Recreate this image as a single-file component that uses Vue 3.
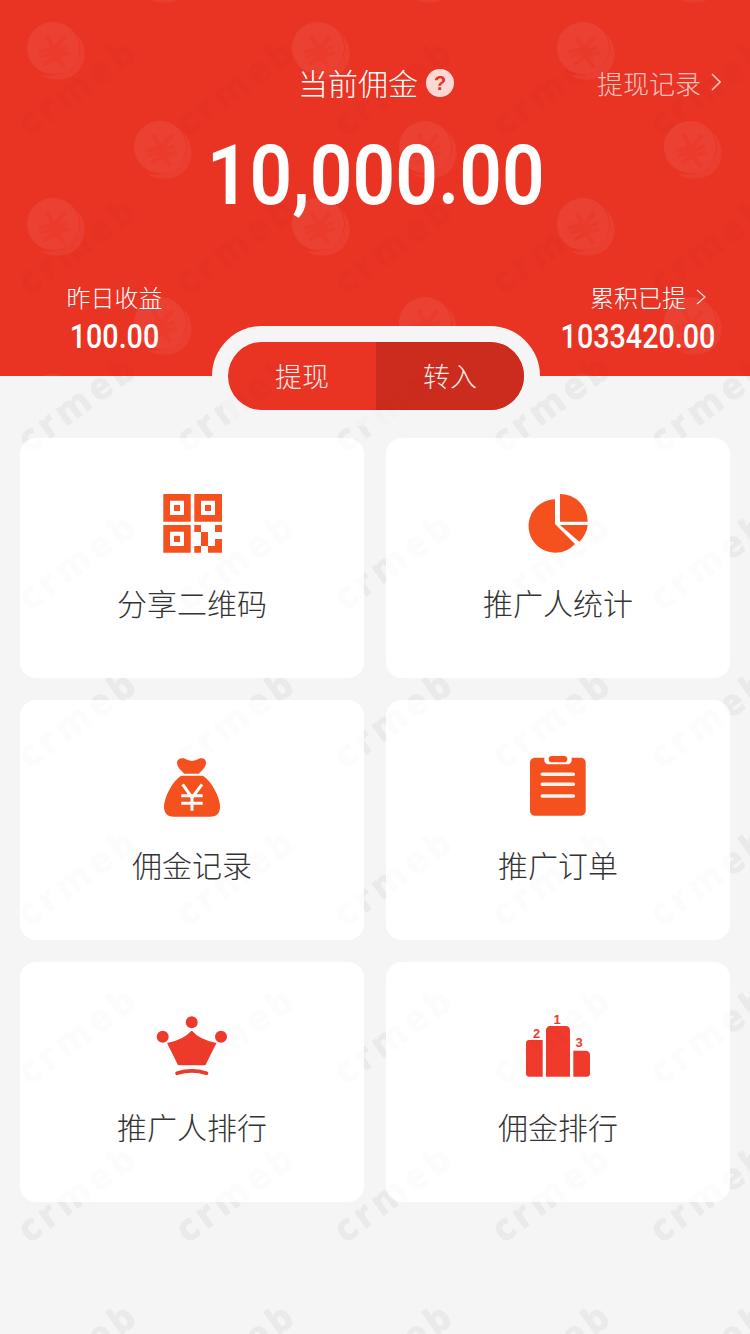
<script setup>
const menus = [
  { label: '分享二维码', icon: 'qr' },
  { label: '推广人统计', icon: 'pie' },
  { label: '佣金记录', icon: 'bag' },
  { label: '推广订单', icon: 'clip' },
  { label: '推广人排行', icon: 'crown' },
  { label: '佣金排行', icon: 'podium' }
]
</script>

<template>
  <div class="page">
    <svg class="watermark" width="750" height="1334">
      <defs>
        <pattern id="markTile" width="158" height="158" patternUnits="userSpaceOnUse">
          <text class="mark" x="78" y="99" text-anchor="middle" transform="rotate(-36 78 86)">crmeb</text>
        </pattern>
      </defs>
      <rect width="750" height="1334" fill="url(#markTile)" />
    </svg>

    <div class="hero">
      <svg class="coins" width="750" height="376">
        <defs>
          <g id="coin">
            <circle cx="0" cy="0" r="26" fill="#fff" fill-opacity=".07" />
            <path d="M22 -15 C35 -4 35 17 21 27 C11 33 -3 33 -12 27 C6 30 25 20 27 1 C27 -6 25 -11 22 -15Z" fill="#fff" fill-opacity=".06" />
            <path d="M-5 -14 L1 -3 L11 -14 L14 -11 L5 1 L14 -3 L15 1 L5 6 L16 3 L17 7 L7 10 L13 19 L9 21 L2 12 L-8 18 L-10 14 L-1 8 L-12 11 L-13 7 L-3 4 L-14 6 L-15 2 L-3 -1 L-9 -11Z" fill="#e93323" fill-opacity=".38" />
          </g>
          <pattern id="coinTile" x="0" y="10" width="265" height="176" patternUnits="userSpaceOnUse">
            <use href="#coin" x="53" y="38" />
            <use href="#coin" x="160" y="137" />
          </pattern>
        </defs>
        <rect width="750" height="376" fill="url(#coinTile)" />
      </svg>

      <div class="hero-top">
        <div></div>
        <div class="title">
          <span>当前佣金</span>
          <span class="help">?</span>
        </div>
        <div class="record">
          <span>提现记录</span>
          <svg width="10" height="18" viewBox="0 0 10 18"><path d="M1 1 L9 9 L1 17" fill="none" stroke="currentColor" stroke-width="1.6" /></svg>
        </div>
      </div>

      <div class="amount"><span>10,000.00</span></div>

      <div class="stats">
        <div class="stat">
          <div class="stat-label">昨日收益</div>
          <div class="stat-value"><span>100.00</span></div>
        </div>
        <div class="stat">
          <div class="stat-label">
            累积已提
            <svg class="stat-arrow" width="10" height="16" viewBox="0 0 10 16"><path d="M1 1 L9 8 L1 15" fill="none" stroke="currentColor" stroke-width="1.4" /></svg>
          </div>
          <div class="stat-value"><span>1033420.00</span></div>
        </div>
      </div>

      <div class="ring">
        <div class="pill">
          <div class="pill-btn">提现</div>
          <div class="pill-btn dark">转入</div>
        </div>
      </div>
    </div>

    <div class="grid">
      <div v-for="m in menus" :key="m.label" class="card">
        <div class="icon">
          <svg v-if="m.icon === 'qr'" width="60" height="60" viewBox="0 0 60 60" fill="#f4511e">
            <path fill-rule="evenodd" d="M1.3 0H28.7V27.7H1.3ZM8 6.7V21H22V6.7ZM12 11H18V17H12ZM32.3 0H60V27.7H32.3ZM39 6.7V21H53V6.7ZM43 11H49V17H43ZM1.3 31H28.7V58.7H1.3ZM8 37.7V52H22V37.7ZM12 42H18V48H12Z" />
            <path d="M32.3 31H39V38H32.3ZM53 31H60V38H53ZM39 38H46V52H39ZM32.3 52H39V58.7H32.3ZM53 45H60V58.7H46V52H53Z" />
          </svg>
          <svg v-else-if="m.icon === 'pie'" width="60" height="60" viewBox="0 0 60 60" fill="#f4511e">
            <path d="M27 30 L47 50 A26.7 26.7 0 1 1 27 5.3Z" />
            <path d="M32 0 A27.7 27.7 0 0 1 59.7 27.7 H32Z" />
            <path d="M32 31 H59.7 A27.7 27.7 0 0 1 51.3 47.7Z" />
          </svg>
          <svg v-else-if="m.icon === 'bag'" width="60" height="60" viewBox="0 -1.7 60 60" fill="#f4511e">
            <path d="M15 5 C15 1 20 0 23 1 C26 2.5 28 3 30 3 C32 3 34 2.5 37 1 C40 0 44 1 44 5 C44 10 39 13 37 16 H22 C20 13 15 10 15 5Z" />
            <path d="M19 18 H41 C50 24 58 40 58 49 C58 56 54 59 48 59 H12 C6 59 2 56 2 49 C2 40 10 24 19 18Z" />
            <path d="M20.7 26.6 L30 40 L40 26.6 M19.3 38 H40.7 M19.3 45.6 H40.7 M30 38 V53" fill="none" stroke="#fff" stroke-width="3" />
          </svg>
          <svg v-else-if="m.icon === 'clip'" width="60" height="60" viewBox="0 -1.7 60 60" fill="#f4511e">
            <path d="M7 0 H16.3 V2 C16.3 5 18 6.6 21 6.6 H39 C42 6.6 43.7 5 43.7 2 V0 H52.7 C55.5 0 57.7 2.2 57.7 5 V53 C57.7 55.8 55.5 58 52.7 58 H7 C4.2 58 2 55.8 2 53 V5 C2 2.2 4.2 0 7 0Z" />
            <rect x="20.7" y="-1.7" width="18.6" height="6.3" rx="3.1" />
            <path d="M14.3 16.6 H45.3 M14.3 26.6 H45.3 M14.3 38.3 H45.3" stroke="#fff3ee" stroke-width="3.6" stroke-linecap="round" fill="none" />
          </svg>
          <svg v-else-if="m.icon === 'crown'" width="76" height="60" viewBox="0 3 76 60" fill="#ee3a2b">
            <circle cx="8.7" cy="21.7" r="6" />
            <circle cx="37.7" cy="7.3" r="6" />
            <circle cx="67" cy="21.7" r="6" />
            <path d="M14 28.5 C24 26.5 32 23 37.7 16.5 C43 23 52 26.5 61.5 28.5 L51 49.5 H24.5Z" stroke="#ee3a2b" stroke-width="1.4" stroke-linejoin="round" />
            <path d="M23 58.3 Q37.7 53.5 52.5 58.3" fill="none" stroke="#ee3a2b" stroke-width="3.6" stroke-linecap="round" />
          </svg>
          <svg v-else width="64" height="60" viewBox="0 6 64 60" fill="#ef3a2c">
            <path d="M3 28 H16.7 V64.7 H3 C1.3 64.7 0 63.4 0 61.7 V31 C0 29.3 1.3 28 3 28Z" />
            <path d="M24 14 H40 C42.2 14 44 15.8 44 18 V64.7 H20 V18 C20 15.8 21.8 14 24 14Z" />
            <path d="M47.3 38.7 H60 C62.2 38.7 64 40.5 64 42.7 V61.7 C64 63.4 62.7 64.7 61 64.7 H47.3Z" />
            <text class="rank" x="10.7" y="25.5">2</text>
            <text class="rank" x="31" y="11.5">1</text>
            <text class="rank" x="53" y="34.5">3</text>
          </svg>
        </div>
        <div class="label">{{ m.label }}</div>
      </div>
    </div>

    <svg class="watermark over" width="750" height="1334">
      <rect width="750" height="1334" fill="url(#markTile)" />
    </svg>
  </div>
</template>

<style scoped>
.page {
  position: relative;
  width: 750px;
  height: 1334px;
  overflow: hidden;
  background: #f5f5f5;
  font-family: "Noto Sans CJK SC", "Liberation Sans", sans-serif;
  font-weight: 300;
}
.hero {
  position: relative;
  height: 376px;
  padding-top: 62px;
  box-sizing: border-box;
  background: #e93323;
  color: #fff;
}
.coins {
  position: absolute;
  left: 0;
  top: 0;
}
.hero-top {
  position: relative;
  display: grid;
  grid-template-columns: 1fr auto 1fr;
  align-items: center;
  height: 40px;
  margin-left: 2px;
}
.title {
  display: flex;
  align-items: center;
  gap: 8px;
  font-size: 30px;
  line-height: 40px;
}
.help {
  width: 28px;
  height: 28px;
  margin-top: 2px;
  border-radius: 50%;
  background: #fdd9d5;
  color: #e93323;
  font-family: "Liberation Sans", sans-serif;
  font-weight: 700;
  font-size: 20px;
  line-height: 28px;
  text-align: center;
}
.record {
  display: flex;
  align-items: center;
  justify-content: flex-end;
  gap: 10px;
  padding-right: 29px;
  font-size: 26px;
  color: rgba(255, 255, 255, 0.72);
}
.amount {
  position: relative;
  margin-top: 29px;
  margin-left: 2px;
  height: 90px;
  text-align: center;
  font-family: Roboto, "Liberation Sans", sans-serif;
  font-weight: 600;
  font-size: 84px;
  line-height: 90px;
}
.amount span {
  display: inline-block;
  transform: scaleX(0.89);
}
.stats {
  position: relative;
  display: flex;
  justify-content: space-between;
  margin-top: 58px;
  padding: 0 23px 0 63px;
}
.stat {
  text-align: center;
}
.stat-label {
  position: relative;
  font-size: 24px;
  line-height: 36px;
}
.stat-arrow {
  position: absolute;
  right: 21px;
  top: 10px;
  color: rgba(255, 255, 255, 0.8);
}
.stat-value {
  font-family: Roboto, "Liberation Sans", sans-serif;
  font-weight: 500;
  font-size: 33px;
  line-height: 44px;
}
.stat-value span {
  display: inline-block;
  transform: scaleX(0.87);
}
.ring {
  position: absolute;
  left: 212px;
  top: 326px;
  width: 328px;
  height: 100px;
  box-sizing: border-box;
  padding: 16px;
  border-radius: 50px;
  background: #f5f5f5;
}
.pill {
  display: flex;
  height: 68px;
  border-radius: 34px;
  overflow: hidden;
  background: #e93323;
}
.pill-btn {
  flex: 1;
  font-size: 27px;
  line-height: 68px;
  text-align: center;
  color: rgba(255, 255, 255, 0.92);
}
.pill-btn.dark {
  background: #cc2c1e;
}
.grid {
  position: relative;
  display: grid;
  grid-template-columns: 344px 344px;
  grid-auto-rows: 240px;
  gap: 22px;
  padding: 62px 20px 0;
}
.card {
  display: flex;
  flex-direction: column;
  align-items: center;
  padding-top: 56px;
  box-sizing: border-box;
  background: #fff;
  border-radius: 16px;
}
.icon {
  display: flex;
  justify-content: center;
  height: 60px;
}
.icon svg {
  overflow: visible;
}
.rank {
  font-family: "Liberation Sans", sans-serif;
  font-weight: 700;
  font-size: 13px;
  text-anchor: middle;
}
.label {
  margin-top: 24px;
  font-size: 30px;
  line-height: 48px;
  color: #333;
}
.watermark {
  position: absolute;
  left: 0;
  top: 0;
  pointer-events: none;
}
.watermark.over {
  opacity: 0.3;
}
.mark {
  font-family: "Open Sans", "Liberation Sans", sans-serif;
  font-weight: 700;
  font-size: 36px;
  letter-spacing: 5px;
  fill: #000;
  stroke: #000;
  stroke-width: 1px;
  stroke-linejoin: round;
  opacity: 0.03;
}
</style>
